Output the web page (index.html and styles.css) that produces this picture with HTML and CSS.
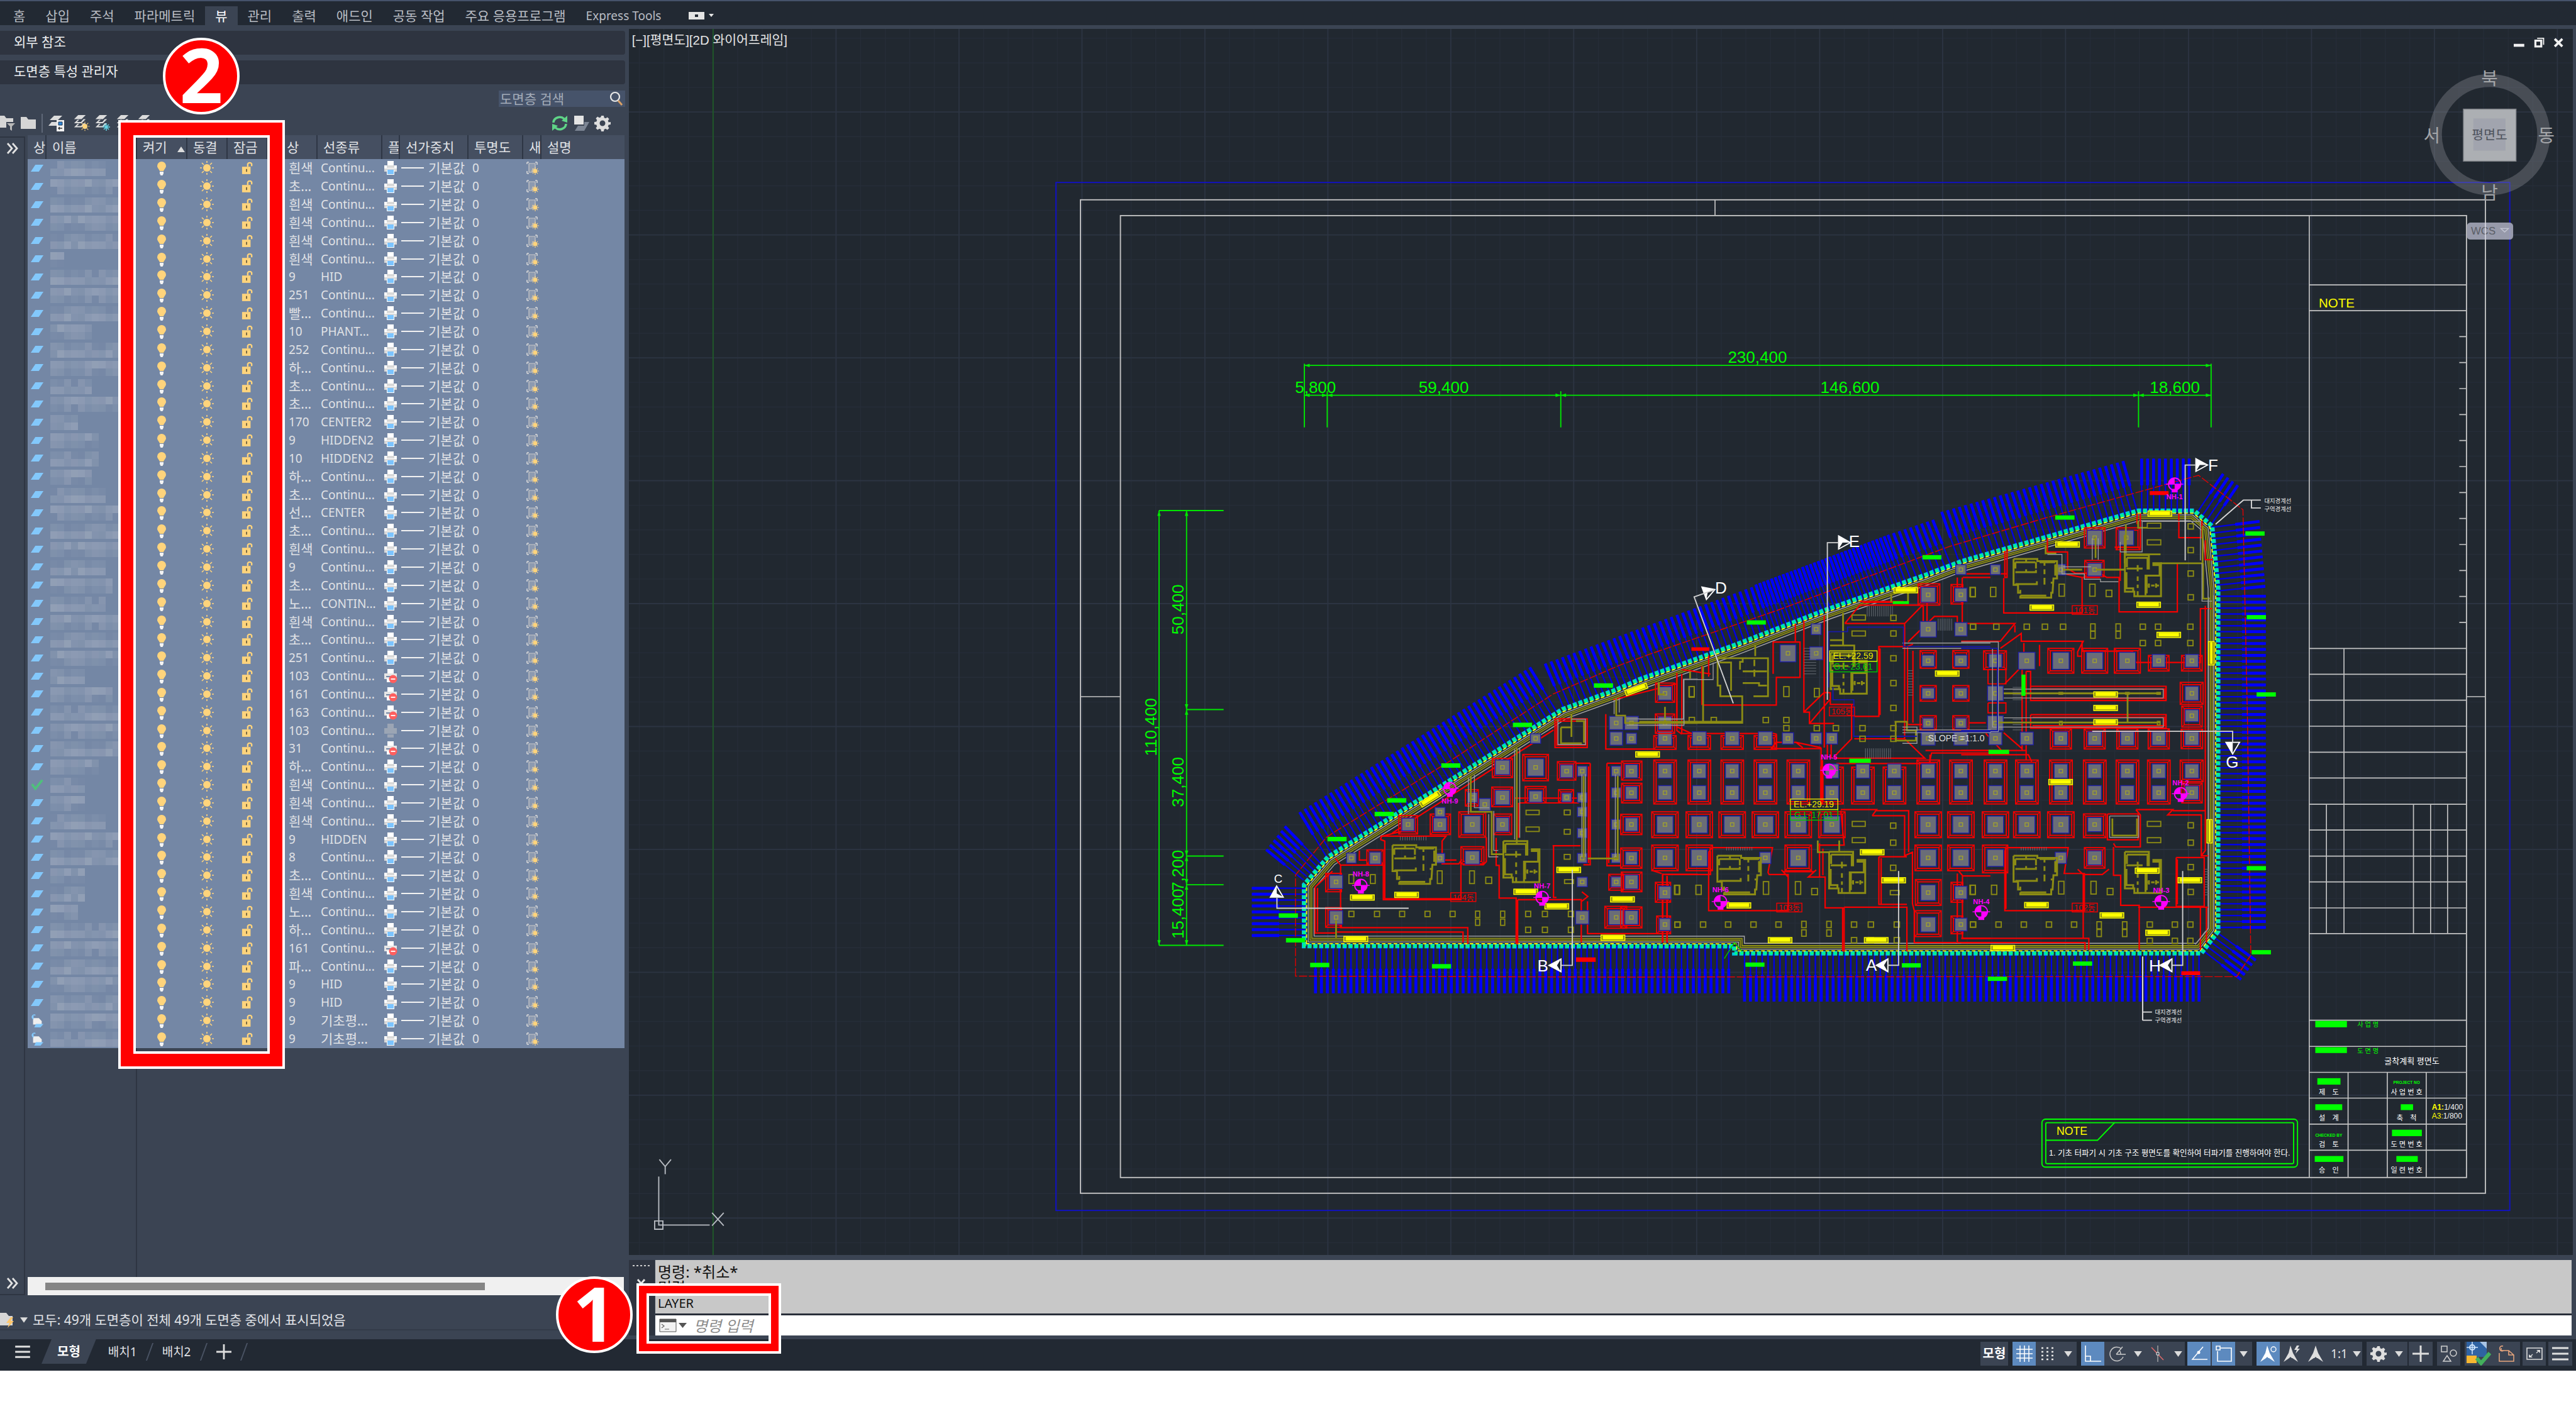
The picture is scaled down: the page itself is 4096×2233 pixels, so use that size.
FILE: index.html
```html
<!DOCTYPE html>
<html lang="ko">
<head>
<meta charset="utf-8">
<title>도면층 특성 관리자</title>
<link rel="stylesheet" href="styles.css">
</head>
<body>
<svg class="defs" aria-hidden="true">
  <symbol id="i-bulb" viewBox="0 0 16 24"><path d="M8 2a7 7 0 0 1 7 7c0 3-3 5-4 8H5C4 14 1 12 1 9a7 7 0 0 1 7-7z" fill="#ffd47c"/><path d="M5 18h6v3l-1.500 3h-3L5 21z" fill="#f4f4f4"/></symbol>
  <symbol id="i-sun" viewBox="0 0 24 24"><circle cx="12" cy="12" r="6" fill="#ffd47c"/><path d="M12 1v3M12 20v3M1 12h3M20 12h3M4 4l3 3M17 17l3 3M20 4l-3 3M7 17l-3 3" stroke="#ffd47c" stroke-width="1.600"/></symbol>
  <symbol id="i-lock" viewBox="0 0 20 24"><path d="M1 10h15v13H1z" fill="#ffd47c"/><path d="M11 10V5a4 4 0 0 1 7 0v4" fill="none" stroke="#ffd47c" stroke-width="2.600"/><path d="M8 14h2v5H8z" fill="#6d5f3c"/></symbol>
  <symbol id="i-print" viewBox="0 0 24 24"><path d="M7 1h10v7H7z" fill="#fff"/><path d="M2 8h20v10H2z" fill="#d9d9d9"/><path d="M2 8h4v4h12V8h4v5H2z" fill="#fff"/><path d="M6 15h12v8H6z" fill="#fff"/><path d="M7 15h10v7H7z" fill="#7cc4ff"/></symbol>
  <symbol id="i-noprint" viewBox="0 0 24 24"><path d="M7 1h10v7H7z" fill="#fff"/><path d="M2 8h20v9H2z" fill="#e6e6e6"/><path d="M5 12h14v2H5z" fill="#7487a5"/><path d="M6 16h6v6H6z" fill="#fff"/><circle cx="16" cy="17" r="6.500" fill="#ff5f5f"/><path d="M12.500 17h7" stroke="#fff" stroke-width="1.800"/></symbol>
  <symbol id="i-dimprint" viewBox="0 0 24 24"><path d="M7 1h10v7H7zM2 8h20v9H2zM7 18h10v5H7z" fill="#9ba5b4"/></symbol>
  <symbol id="i-vp" viewBox="0 0 24 24"><path d="M4 3h3M4 3v3M20 3h-3M20 3v4M4 21h3M4 21v-4" fill="none" stroke="#d8d8d8" stroke-width="1.600"/><path d="M7 5h10v9h-4v5H7z" fill="#8d9ab0" stroke="#c8c8c8" stroke-width="1.200"/><circle cx="17" cy="17" r="3.500" fill="#ffd47c"/><path d="M17 11v2M17 21v2M11 17h2M21 17h2M13 13l1 1M21 21l-1-1M21 13l-1 1M13 21l1-1" stroke="#ffd47c" stroke-width="1.200"/></symbol>
  <symbol id="i-layer" viewBox="0 0 24 16"><path d="M9 2h14l-8 12H1z" fill="#83c8fb"/></symbol>
  <symbol id="i-check" viewBox="0 0 24 20"><path d="M3 9l6 8L21 2" fill="none" stroke="#4fc07c" stroke-width="4"/></symbol>
  <symbol id="i-xref" viewBox="0 0 24 24"><path d="M5 8h10l5 5v6H5z" fill="#eee"/><path d="M10 18h13l-5 6H7z" fill="#83c8fb"/><path d="M9 3a3.500 3.500 0 1 0-4 6v-5" fill="none" stroke="#83c8fb" stroke-width="1.800"/></symbol>
  <symbol id="i-folder" viewBox="0 0 26 26"><path d="M1 3h9l3 4h12v15H1z" fill="#d6d6d6"/></symbol>
  <symbol id="i-filter" viewBox="0 0 26 26"><path d="M0 1h9l3 4h11v6H12v9H0z" fill="#d6d6d6"/><path d="M13 13h13l-5 5v7l-3-2v-5z" fill="#b8b8b8"/></symbol>
  <symbol id="i-stack" viewBox="0 0 26 26"><path d="M10 0h13l-7 7H3zM9 8l-6 6h13l7-7h-4l-4 5H8l4-4zM9 15l-6 6h13l7-7h-4l-4 5H8l4-4z" fill="#dcdcdc"/></symbol>
  <symbol id="i-state" viewBox="0 0 26 26"><path d="M10 1h13l-7 7H3zM6 11h8v6H1z" fill="#dcdcdc"/><path d="M14 8h12v18H14z" fill="#f2f2f2"/><path d="M17 11h6v5h-6z" fill="#2f86d8" stroke="#1c3550"/><path d="M17 21h6M19 19l-2 2 2 2" fill="none" stroke="#333" stroke-width="1.400"/></symbol>
  <symbol id="i-refresh" viewBox="0 0 26 26"><path d="M3 12A10 9 0 0 1 20 6M23 14A10 9 0 0 1 6 20" fill="none" stroke="#5fd487" stroke-width="3.600"/><path d="M25 1v11l-9-3zM1 25V14l9 3z" fill="#5fd487"/></symbol>
  <symbol id="i-over" viewBox="0 0 26 26"><path d="M2 1h15v14H2z" fill="#e4e4e4"/><path d="M18 11h8l-8 14H3l5-8h10z" fill="#7c8594"/></symbol>
  <symbol id="i-gear" viewBox="0 0 26 26"><path fill="#dedede" fill-rule="evenodd" d="M11 1h4l.6 3.300 2.400 1 2.800-1.900 2.800 2.800-1.900 2.800 1 2.400L26 11v4l-3.300.6-1 2.400 1.900 2.800-2.800 2.800-2.800-1.900-2.400 1L15 26h-4l-.6-3.300-2.400-1-2.800 1.900-2.800-2.800 1.900-2.800-1-2.400L0 15v-4l3.300-.6 1-2.400-1.900-2.800 2.800-2.800L8 4.300l2.400-1zM13 8.500a4.500 4.500 0 1 0 0 9 4.500 4.500 0 0 0 0-9z"/></symbol>
  <symbol id="i-mag" viewBox="0 0 24 24"><circle cx="10" cy="9" r="7" fill="none" stroke="#e8e8e8" stroke-width="2.200"/><path d="M15 15l6 7" stroke="#d9a066" stroke-width="3"/></symbol>
  <symbol id="i-caret" viewBox="0 0 14 10"><path d="M0 0h14L7 10z" fill="#dcdcdc"/></symbol>
  <symbol id="i-chev" viewBox="0 0 20 18"><path d="M2 1l7 8-7 8M10 1l7 8-7 8" fill="none" stroke="#e2e2e2" stroke-width="2.800"/></symbol>
  <symbol id="i-menu" viewBox="0 0 26 22"><path d="M0 2h26M0 11h26M0 20h26" stroke="#e0e0e0" stroke-width="3.200"/></symbol>
  <symbol id="i-plus" viewBox="0 0 26 26"><path d="M13 0v26M0 13h26" stroke="#dedede" stroke-width="3"/></symbol>
  <symbol id="i-grid" viewBox="0 0 26 26"><path d="M6 0v26M13 0v26M20 0v26M0 6h26M0 13h26M0 20h26" stroke="#fff" stroke-width="1.500"/></symbol>
  <symbol id="i-snap" viewBox="0 0 26 26"><path d="M3 4h3M11 4h3M19 4h3M3 10h3M11 10h3M19 10h3M3 16h3M11 16h3M19 16h3M3 22h3M11 22h3M19 22h3" stroke="#e6e6e6" stroke-width="2.600"/></symbol>
  <symbol id="i-ortho" viewBox="0 0 26 26"><path d="M1 0v25h25M1 17h8v8" fill="none" stroke="#fff" stroke-width="1.600"/></symbol>
  <symbol id="i-polar" viewBox="0 0 26 26"><path d="M22 18a11 11 0 1 1-3-13M11 14h15M11 14L21 2M18 14a8 8 0 0 0-2-6" fill="none" stroke="#c9c9c9" stroke-width="1.500"/></symbol>
  <symbol id="i-iso" viewBox="0 0 26 26"><path d="M3 3l19 20" stroke="#e06a6a" stroke-width="1.500"/><path d="M13 0v26" stroke="#a9a9a9" stroke-width="1.400"/><path d="M11 11h4v4h-4z" fill="#3b4453" stroke="#eee"/></symbol>
  <symbol id="i-track" viewBox="0 0 26 26"><path d="M19 2L2 22h24" fill="none" stroke="#fff" stroke-width="1.500"/><circle cx="12" cy="11" r="2.500" fill="#fff"/></symbol>
  <symbol id="i-osnap" viewBox="0 0 26 26"><path d="M8 4h17v21H3V9" fill="none" stroke="#fff" stroke-width="1.600"/><path d="M1 1h6v6H1z" fill="none" stroke="#fff" stroke-width="1.600"/></symbol>
  <symbol id="i-person" viewBox="0 0 26 26"><path d="M13 0l4 12 8 14-9-6h-1l-2-2-2 2h-1l-9 6 8-14z" fill="#dedede"/></symbol>
  <symbol id="i-person-o" viewBox="0 0 26 26"><path d="M11 0l4 12 8 14-9-6h-1l-2-2-2 2-9 6 8-14z" fill="#fff"/><circle cx="21" cy="6" r="4" fill="none" stroke="#fff" stroke-width="1.400"/></symbol>
  <symbol id="i-person-b" viewBox="0 0 26 26"><path d="M11 0l4 12 8 14-9-6h-1l-2-2-2 2-9 6 8-14z" fill="#dedede"/><path d="M21 0l-4 7h4l-2 6 7-8h-4l3-5z" fill="#dedede"/></symbol>
  <symbol id="i-shapes" viewBox="0 0 26 26"><path d="M1 1h9v9H1zM10 16l6 9H4z" fill="none" stroke="#cfcfcf" stroke-width="1.500"/><circle cx="20" cy="12" r="5" fill="none" stroke="#cfcfcf" stroke-width="1.500"/></symbol>
  <symbol id="i-hw" viewBox="0 0 40 38"><path d="M1 0h24l8 8v16H1z" fill="#2f63a3"/><path d="M22 0l11 11V0z" fill="#a9c4e4"/><path d="M10 0v20M1 9h18" stroke="#cfe6ff" stroke-width="1.500"/><circle cx="10" cy="9" r="4" fill="none" stroke="#cfe6ff" stroke-width="2"/><path d="M1 22h16v12H1z" fill="#f7b731"/><path d="M17 26l7 8L38 18" fill="none" stroke="#43b05c" stroke-width="6"/></symbol>
  <symbol id="i-clip" viewBox="0 0 26 26"><path d="M8 1a4 4 0 1 0 1 7M5 4v4h12l8 7v10H2V12M17 8v7h8" fill="none" stroke="#e9a67e" stroke-width="1.500"/></symbol>
  <symbol id="i-full" viewBox="0 0 26 20"><path d="M1 1h24v18H1z" fill="none" stroke="#dcdcdc" stroke-width="1.600"/><path d="M16 4h6v5zM4 11v5h6z" fill="#dcdcdc"/><path d="M20 5l-4 4M6 15l4-4" stroke="#dcdcdc" stroke-width="1.400"/></symbol>
  <symbol id="i-cmd" viewBox="0 0 28 22"><path d="M1 1h26v20H1z" fill="#f3f3f3" stroke="#555"/><path d="M1 1h26v5H1z" fill="#555"/><path d="M4 9l4 3-4 3M9 17h7" fill="none" stroke="#666" stroke-width="1.200"/></symbol>
  <symbol id="i-bolt" viewBox="0 0 26 26"><path d="M0 2h12l4 5h6v15H0z" fill="#d6d6d6"/><path d="M19 9l-7 9h5l-3 8 10-11h-5l4-6z" fill="#ffc66b"/></symbol>
</svg>

<div class="app">
  <nav class="ribbon">
    <button>홈</button><button>삽입</button><button>주석</button><button>파라메트릭</button><button class="on">뷰</button><button>관리</button><button>출력</button><button>애드인</button><button>공동 작업</button><button>주요 응용프로그램</button><button class="latin">Express Tools</button>
    <button class="pill" aria-label="리본 최소화"><svg viewBox="0 0 40 14" width="40" height="14"><path d="M0 1h25v12H0z" fill="#e4e4e4"/><path d="M10 5h5v4h-5z" fill="#222933"/><path d="M32 4h8l-4 5z" fill="#e4e4e4"/></svg></button>
  </nav>

  <div class="work">
    <aside class="palette">
      <h2 class="title">외부 참조</h2>
      <h2 class="title">도면층 특성 관리자</h2>
      <div class="searchrow">
        <label class="search"><input type="text" placeholder="도면층 검색" aria-label="도면층 검색"><svg width="24" height="24"><use href="#i-mag"/></svg></label>
      </div>
      <div class="tools">
        <svg><use href="#i-filter"/></svg>
        <svg><use href="#i-folder"/></svg>
        <i class="sep"></i>
        <svg class="state"><use href="#i-state"/></svg>
        <svg class="wide" viewBox="0 0 34 26"><use href="#i-stack" width="24" height="24"/><g transform="translate(12 10)"><use href="#i-sun" width="16" height="16"/></g></svg>
        <svg class="wide" viewBox="0 0 34 26"><use href="#i-stack" width="24" height="24"/><g transform="translate(20 19)" stroke="#63d3e6" stroke-width="1.500"><path d="M-6 0H6M0-6V6M-4-4L4 4M4-4L-4 4"/></g></svg>
        <svg class="wide" viewBox="0 0 34 26"><use href="#i-stack" width="24" height="24"/></svg>
        <svg class="wide" viewBox="0 0 34 26"><use href="#i-stack" width="24" height="24"/></svg>
        <span class="fill"></span>
        <svg><use href="#i-refresh"/></svg>
        <svg><use href="#i-over"/></svg>
        <svg><use href="#i-gear"/></svg>
      </div>
      <div class="body">
        <div class="rail">
          <svg width="20" height="18"><use href="#i-chev"/></svg>
          <svg width="20" height="18"><use href="#i-chev"/></svg>
        </div>
        <div class="list">
          <table class="layers">
            <colgroup><col class="c1"><col class="c2"><col class="c3"><col class="c4"><col class="c4"><col class="c5"><col class="c6"><col class="c7"><col class="c8"><col class="c9"><col class="c1"><col></colgroup>
            <thead><tr><th>상</th><th>이름</th><th class="sort">켜기<svg width="12" height="9"><path d="M0 9h12L6 0z" fill="#ddd"/></svg></th><th>동결</th><th>잠금</th><th class="tail">상</th><th>선종류</th><th>플</th><th>선가중치</th><th>투명도</th><th>새</th><th>설명</th></tr></thead>
            <tbody id="rows"></tbody>
          </table>
          <div class="hscroll"><div></div></div>
        </div>
      </div>
      <div class="summary"><svg width="26" height="26"><use href="#i-bolt"/></svg><svg width="12" height="9"><use href="#i-caret"/></svg><span>모두: 49개 도면층이 전체 49개 도면층 중에서 표시되었음</span></div>
      <div class="annobox tall"></div>
      <div class="badge two">2</div>
    </aside>

    <main class="stage">
      <svg id="view" viewBox="1074 49 3321 2095" preserveAspectRatio="xMinYMin meet"></svg>
      <section class="command">
        <div class="grip"><svg width="38" height="60" viewBox="0 0 38 60"><path d="M6 9h30" stroke="#ccc" stroke-width="2" stroke-dasharray="3 3"/><path d="M14 31l11 13M25 31l-11 13" stroke="#e4e4e4" stroke-width="3"/></svg></div>
        <div class="console">
          <div class="history"><p>명령: *취소*</p><p>명령:</p><p class="cmdname">LAYER</p></div>
          <label class="prompt"><svg width="28" height="22"><use href="#i-cmd"/></svg><svg width="13" height="8"><path d="M0 0h13L6.500 8z" fill="#555"/></svg><input type="text" placeholder="명령 입력" aria-label="명령 입력"></label>
        </div>
      </section>
    </main>
  </div>

  <footer class="status">
    <div class="tabs">
      <button class="ham" aria-label="메뉴"><svg width="26" height="20"><use href="#i-menu"/></svg></button>
      <button class="tab on">모형</button>
      <button class="tab">배치1</button><i></i>
      <button class="tab">배치2</button><i></i>
      <button class="add" aria-label="새 배치"><svg width="24" height="24"><use href="#i-plus"/></svg></button><i></i>
    </div>
    <div class="toggles">
      <button class="g w44 txt">모형</button>
      <div class="g m7"><button class="on w37"><svg><use href="#i-grid"/></svg></button><button class="w38"><svg><use href="#i-snap"/></svg></button><button class="w27"><svg class="car"><use href="#i-caret"/></svg></button></div>
      <div class="g m7"><button class="on w37"><svg><use href="#i-ortho"/></svg></button><button class="w42"><svg><use href="#i-polar"/></svg></button><button class="w22"><svg class="car"><use href="#i-caret"/></svg></button><button class="w42"><svg><use href="#i-iso"/></svg></button><button class="w22"><svg class="car"><use href="#i-caret"/></svg></button></div>
      <div class="g m3"><button class="on w37"><svg><use href="#i-track"/></svg></button><button class="on w37 m2"><svg><use href="#i-osnap"/></svg></button><button class="w27"><svg class="car"><use href="#i-caret"/></svg></button></div>
      <div class="g m7"><button class="on w37"><svg><use href="#i-person-o"/></svg></button><button class="w38"><svg><use href="#i-person-b"/></svg></button><button class="w38"><svg><use href="#i-person"/></svg></button><button class="w37 ratio">1:1</button><button class="w18"><svg class="car"><use href="#i-caret"/></svg></button></div>
      <div class="g m7"><button class="w38"><svg><use href="#i-gear"/></svg></button><button class="w27"><svg class="car"><use href="#i-caret"/></svg></button></div>
      <button class="g w38 m2"><svg><use href="#i-plus"/></svg></button>
      <button class="g w37 m7"><svg><use href="#i-shapes"/></svg></button>
      <div class="g m7"><button class="w44"><svg class="hw"><use href="#i-hw"/></svg></button><button class="w44"><svg><use href="#i-clip"/></svg></button></div>
      <button class="g w37 m3"><svg><use href="#i-full"/></svg></button>
      <button class="g w38 m3"><svg><use href="#i-menu"/></svg></button>
    </div>
  </footer>
  <div class="annobox small"></div>
  <div class="badge one">1</div>
</div>
<script src="drawing.js"></script>
</body>
</html>
```
FILE: styles.css
```css
* { box-sizing: border-box; }
body {
  margin: 0;
  background: #fff;
  color: #e0e2e6;
  font: 21px/28px "Noto Sans", "Noto Sans CJK KR", sans-serif;
}
button, input { font: inherit; color: inherit; border: 0; background: none; padding: 0; margin: 0; }
h2, p { margin: 0; font: inherit; }
.defs { position: absolute; width: 0; height: 0; }
.app {
  position: relative;
  display: flex;
  flex-direction: column;
  height: calc(100vh - 53px);
  background: #3b4453;
}

/* ribbon */
.ribbon {
  display: flex;
  flex: none;
  height: 40px;
  padding: 8px 0 0 5px;
  background: #222933;
  border-top: 2px solid #46526b;
  color: #b9bdc4;
}
.ribbon button { padding: 0 16px; height: 30px; white-space: nowrap; }
.ribbon .on { background: #3b4453; color: #fff; }
.ribbon .latin { font-size: 19px; }
.ribbon .pill { padding: 0 28px; }
.ribbon .pill svg { display: block; }

.work { display: flex; flex: 1; min-height: 0; }

/* palette */
.palette {
  position: relative;
  display: flex;
  flex-direction: column;
  flex: none;
  width: 994px;
  padding-top: 9px;
}
.title {
  height: 38px;
  margin-bottom: 9px;
  padding: 3px 22px;
  background: #2e3440;
  border-radius: 0 4px 4px 0;
  color: #eceef0;
}
.searchrow { display: flex; justify-content: flex-end; height: 26px; margin-top: 1px; }
.search {
  display: flex;
  align-items: center;
  width: 201px;
  padding: 0 2px;
  background: #46536a;
}
.search input { flex: 1; width: 0; }
.search input::placeholder { color: #a3abb8; opacity: 1; }
.tools {
  display: flex;
  align-items: center;
  height: 45px;
  padding: 6px 23px 0 0;
  gap: 8px;
}
.tools svg { width: 26px; height: 26px; flex: none; }
.tools svg:first-child { margin-left: -2px; }
.tools .state { margin-right: 5px; }
.tools .wide { width: 34px; margin-right: -8px; }
.sep { width: 2px; height: 30px; background: #5f6878; }
.fill { flex: 1; }
.body { display: flex; flex: 1; min-height: 0; }
.rail {
  display: flex;
  flex-direction: column;
  justify-content: space-between;
  width: 40px;
  margin: 2px 4px 0 0;
  padding: 8px 10px;
  border: 2px solid #2e3542;
  border-left: 0;
}
.list {
  display: flex;
  flex-direction: column;
  justify-content: space-between;
  flex: 1;
  background: linear-gradient(#2e3542, #2e3542) 172px 0 / 2px 100% no-repeat;
}
.layers {
  width: 949px;
  height: 1452px;
  border-collapse: collapse;
  table-layout: fixed;
}
.c1 { width: 29px; }
.c2 { width: 144px; }
.c3 { width: 80px; }
.c4 { width: 64px; }
.c5 { width: 79px; }
.c6 { width: 103px; }
.c7 { width: 28px; }
.c8 { width: 109px; }
.c9 { width: 87px; }
.layers th {
  height: 38px;
  padding: 0 0 0 9px;
  background: #454f61;
  border-right: 2px solid #2e3645;
  font-weight: 400;
  text-align: left;
  white-space: nowrap;
  overflow: hidden;
}
.layers th:last-child { border-right: 0; }
.layers .tail { padding-left: 30px; }
.sort svg { margin-left: 16px; }
.layers td {
  padding: 0;
  background: #7487a5;
  line-height: 26px;
  text-align: center;
  white-space: nowrap;
  overflow: hidden;
}
.layers td svg { display: block; margin: 0 auto; }
.layers .name svg { margin: 0; }
.layers .color { padding-left: 34px; text-align: left; }
.layers .type { padding-left: 6px; text-align: left; }
.layers .num { font-size: 19px; }
.layers .weight { text-align: left; padding-left: 3px; }
.weight span { display: flex; align-items: center; gap: 7px; }
.weight span::before { content: ""; width: 36px; height: 2px; background: #f2f2f2; }
.layers .alpha { padding-left: 7px; text-align: left; font-size: 19px; }
.hscroll { height: 29px; margin-right: 2px; padding: 9px 0 8px 28px; background: #f0f0f0; }
.hscroll div { width: 76%; height: 12px; background: #858585; }
.summary {
  display: flex;
  align-items: center;
  gap: 8px;
  height: 56px;
  margin-bottom: 14px;
  padding-top: 24px;
  border-bottom: 2px solid #333b49;
}
.summary svg { flex: none; }
.summary svg:first-child { margin-left: -2px; }

/* drawing area */
.stage { display: flex; flex-direction: column; flex: 1; min-width: 0; padding: 6px 5px 0 6px; }
#view { display: block; width: 100%; flex: 1; min-height: 0; background: #212830; }
#view text { font-family: "Liberation Sans", "Noto Sans CJK KR", sans-serif; }
.command { display: flex; flex: none; height: 126px; margin-top: 8px; padding-bottom: 6px; }
.grip { width: 41px; margin-right: 1px; background: #2e3440; }
.console { display: flex; flex-direction: column; flex: 1; margin-right: 2px; background: #2a303b; }
.history {
  flex: 1;
  padding: 6px 4px 0;
  background: #c8c8c8;
  color: #111;
  font-size: 24px;
  line-height: 25px;
}
.history .cmdname { font-size: 20px; }
.prompt {
  display: flex;
  align-items: center;
  gap: 3px;
  height: 32px;
  margin-top: 3px;
  padding-left: 6px;
  background: #fff;
}
.prompt input { flex: 1; padding-left: 8px; height: 32px; color: #333; font-size: 24px; font-style: italic; }
.prompt input::placeholder { color: #8c8c8c; opacity: 1; }

/* status bar */
.status {
  display: flex;
  justify-content: space-between;
  flex: none;
  height: 50px;
  background: #222933;
}
.tabs { display: flex; align-items: center; height: 39px; }
.tabs i { width: 2px; height: 28px; background: #4a5364; transform: skewX(-20deg); }
.tabs svg { display: block; }
.ham { padding: 0 17px 0 23px; }
.tab { height: 39px; padding: 0 19px; font-size: 19px; }
.tab.on {
  padding: 0 25px;
  background: #3b4453;
  color: #fff;
  font-size: 20px;
  font-weight: 700;
  clip-path: polygon(16px 0, 100% 0, calc(100% - 16px) 100%, 0 100%);
}
.add { padding: 0 19px; }
.toggles { display: flex; height: 42px; padding: 4px 6px 0 0; }
.toggles button { display: flex; align-items: center; justify-content: center; height: 38px; }
.toggles svg { width: 26px; height: 26px; }
.toggles .car { width: 13px; height: 9px; }
.toggles .hw { width: 40px; height: 38px; }
.g { display: flex; background: #3b4453; }
.toggles .on { background: #5d8abf; }
.txt { font-size: 20px; font-weight: 700; color: #fff; }
.ratio { font-size: 19px; }
.w18 { width: 18px; }
.w22 { width: 22px; }
.w27 { width: 27px; }
.w37 { width: 37px; }
.w38 { width: 38px; }
.w42 { width: 42px; }
.w44 { width: 44px; }
.m2 { margin-left: 2px; }
.m3 { margin-left: 4px; }
.m7 { margin-left: 7px; }

/* call-outs laid over the window */
.annobox { position: absolute; border: 20px solid #f00; outline: 4px solid #fff; box-shadow: inset 0 0 0 4px #fff; }
.tall { left: 192px; top: 155px; width: 257px; height: 1501px; }
.small { left: 1016px; top: 2045px; width: 222px; height: 104px; border-width: 12px; }
.badge {
  position: absolute;
  display: flex;
  align-items: center;
  justify-content: center;
  width: 122px;
  height: 122px;
  padding-bottom: 6px;
  border: 4px solid #fff;
  border-radius: 50%;
  background: #f00;
  color: #fff;
  font-size: 120px;
  font-weight: 700;
  line-height: 108px;
}
.two { left: 259px; top: 20px; }
.one { left: 884px; top: 2030px; }
```
FILE: drawing.js
```js
// ---- layer table -------------------------------------------------------
const C = 'Continu...';
const layers = [
  ['흰색', C, 80], ['초...', C, 115], ['흰색', C, 120], ['흰색', C, 120], ['흰색', C, 100], ['흰색', C, 22],
  ['9', 'HID', 115], ['251', C, 112], ['빨...', C, 112], ['10', 'PHANT...', 57], ['252', C, 120], ['하...', C, 115],
  ['초...', C, 57], ['초...', C, 120], ['170', 'CENTER2', 34], ['9', 'HIDDEN2', 68], ['10', 'HIDDEN2', 68],
  ['하...', C, 57], ['초...', C, 80], ['선...', 'CENTER', 120], ['초...', C, 103], ['흰색', C, 115], ['9', C, 80],
  ['초...', C, 92], ['노...', 'CONTIN...', 80], ['흰색', C, 120], ['초...', C, 115], ['251', C, 120],
  ['103', C, 45, 'noprint'], ['161', C, 92, 'noprint'], ['163', C, 103, 'noprint'], ['103', C, 115, 'dimprint'],
  ['31', C, 120, 'noprint'], ['하...', C, 68], ['흰색', C, 45, 'print', 'check'], ['흰색', C, 45], ['흰색', C, 80],
  ['9', 'HIDDEN', 115], ['8', C, 115], ['초...', C, 50], ['흰색', C, 45], ['노...', C, 34], ['하...', C, 120],
  ['161', C, 115, 'noprint'], ['파...', C, 115], ['9', 'HID', 120], ['9', 'HID', 115],
  ['9', '기초평...', 120, 'print', 'xref'], ['9', '기초평...', 120, 'print', 'xref']
];
const icon = (n, w, h) => `<svg width="${w}" height="${h}"><use href="#i-${n}"/></svg>`;
const latin = s => /^[\x00-\x7f]+$/.test(s) ? ' num' : '';
function mosaic(row, width) {
  let out = '';
  for (let i = 0; i * 11 < width; i++) {
    for (let j = 0; j < 2; j++) {
      const v = ((row * 7 + i * 5 + j * 11 + i * i * 3) % 9) / 9;
      const base = (row + j) % 2 ? 0.16 : 0.03;
      out += `<rect x="${7 + i * 11}" y="${j * 12 + 2}" width="11" height="12" fill="#c9cdd6" opacity="${(base + v * 0.2).toFixed(2)}"/>`;
    }
  }
  return `<svg width="142" height="26">${out}</svg>`;
}
document.getElementById('rows').innerHTML = layers.map(([color, type, w, plot = 'print', state = 'layer'], i) => `<tr>
<td>${state === 'layer' ? icon('layer', 22, 15) : icon(state, 22, 22)}</td><td class="name">${mosaic(i, w)}</td>
<td>${icon('bulb', 16, 24)}</td><td>${icon('sun', 24, 24)}</td><td>${icon('lock', 18, 22)}</td>
<td class="color${latin(color)}">${color}</td><td class="type${latin(type)}">${type}</td><td>${icon(plot, 24, 24)}</td>
<td class="weight"><span>기본값</span></td><td class="alpha">0</td><td>${icon('vp', 24, 24)}</td><td></td></tr>`).join('');

// ---- drawing -----------------------------------------------------------
let svg = '';
const r1 = n => Math.round(n * 10) / 10;
// each sector of the plan has its own origin and units
const sector = (ox, oy, sx, sy) => (x, y) => [r1(ox + x / sx), r1(oy + y / sy)];
const W = sector(2100, 900, 1.96, 1.8447);
const M = sector(2800, 750, 2.6133, 1.6505);
const E = sector(3350, 750, 2.6133, 1.6505);
const scale = new Map([[W, [1.96, 1.8447]], [M, [2.6133, 1.6505]], [E, [2.6133, 1.6505]]]);
const path = (d, stroke, w = 1.5, extra = '') => { svg += `<path d="${d}" fill="none" stroke="${stroke}" stroke-width="${w}" ${extra}/>`; };
const line = (x1, y1, x2, y2, s, w, e) => path(`M${x1} ${y1}L${x2} ${y2}`, s, w, e);
const rect = (x, y, w, h, fill, stroke = 'none', sw = 1.5, e = '') => { svg += `<rect x="${r1(x)}" y="${r1(y)}" width="${r1(w)}" height="${r1(h)}" fill="${fill}" stroke="${stroke}" stroke-width="${sw}" ${e}/>`; };
const text = (x, y, s, fill, size, e = 'text-anchor="middle"') => { svg += `<text x="${r1(x)}" y="${r1(y)}" fill="${fill}" font-size="${size}" ${e}>${s}</text>`; };
const poly = (S, str, stroke, w, e) => {
  let x = 0, y = 0, d = '';
  str.replace(/([MLHV])\s*(-?\d+)(?:,(-?\d+))?/g, (_, c, a, b) => {
    if (c === 'H') x = +a; else if (c === 'V') y = +a; else { x = +a; y = +b; }
    const p = S(x, y);
    d += (c === 'M' ? 'M' : 'L') + p.join(' ');
  });
  path(d, stroke, w, e);
};

// grid
let minor = '', major = '';
for (let i = -3; i < 76; i++) { const x = r1(1217.8 + i * 42.01); if (x > 1074) (i % 5 ? minor += `M${x} 49V2144` : major += `M${x} 49V2144`); }
for (let i = -3; i < 47; i++) { const y = r1(191 + i * 42); (i % 5 ? minor += `M1074 ${y}H4395` : major += `M1074 ${y}H4395`); }
path(minor, '#262d38', 1.5);
path(major, '#2c3442', 2);
line(1217.8, 49, 1217.8, 2144, '#1f5a26', 2);

// sheet frames
rect(1803.6, 311.4, 2483.7, 1756.6, 'none', '#1010c8', 2);
rect(1845.4, 341, 2400.2, 1697.6, 'none', '#c4c4c4', 2);
rect(1913.7, 368, 2299.6, 1643.7, 'none', '#c4c4c4', 2);
let frame = 'M3944.700 368V2011M2929.500 341V368M1845 1190H1913M4213 1190H4245';
for (const y of [486.4, 530.4, 1107.7, 1151.8, 1196, 1240.5, 1285, 1329, 1373.8, 1418, 1462.5, 1506.6, 1551, 1595, 1743, 1787.7, 1832, 1876, 1920.5, 1965]) frame += `M3944.700 ${y}H4213`;
for (let y = 574.8; y < 1100; y += 44.4) frame += `M4201 ${r1(y)}H4213`;
frame += 'M4004 1107V1595M3974 1374V1595M4122.700 1374V1595M4152 1374V1595M4181 1374V1595M4011 1832V2011M4078 1832V2011M4144.500 1832V2011';
path(frame, '#c4c4c4', 1.8);
text(3961, 525, 'NOTE', '#ffff00', 22, '');

// title block
const G = '#00ff00';
for (const [x, y, w, h] of [[3955, 1744, 54, 11], [3955, 1789, 54, 10], [3958.5, 1842, 39.5, 11], [3955, 1886.5, 46, 10], [3954, 1975, 49, 10], [4101, 1886.5, 21, 10], [4086, 1930, 51, 11], [4093.5, 1975, 36.5, 10]]) rect(x, y, w, h, G);
text(4045, 1754, '사 업 명', G, 11);
text(4045, 1799, '도 면 명', G, 11);
text(4120, 1817, '굴착계획 평면도', '#fff', 14);
text(3978, 1942, 'CHECKED BY', G, 7, 'text-anchor="middle" font-weight="700"');
text(4111, 1852, 'PROJECT NO', G, 7, 'text-anchor="middle" font-weight="700"');
[[1870, '제　도', '사 업 번 호'], [1914, '설　계', '축　척'], [1959, '검　토', '도 면 번 호'], [2003, '승　인', '일 련 번 호']].forEach(([y, a, b]) => { text(3978, y, a, '#fff', 12); text(4111, y, b, '#fff', 12); });
text(4154, 1896, '<tspan fill="#ffff00" font-weight="700">A1:</tspan>1/400', '#eee', 13, '');
text(4154, 1911, '<tspan fill="#ffff00">A3:</tspan>1/800', '#eee', 13, '');

// note box
rect(3488, 1912, 436.6, 82, 'none', G, 2, 'rx="6"');
rect(3494.6, 1918, 423.4, 70, 'none', G, 2, 'rx="2"');
path('M3495 1948H3583L3612 1918', G, 2);
text(3513, 1939, 'NOTE', '#ffff00', 19, '');
text(3500, 1974, '1. 기초 터파기 시 기초 구조 평면도를 확인하여 터파기를 진행하여야 한다.', '#fff', 13.5, '');

// dimensions
path('M2228 624H3777M2228 675H3777M2228 621V730M2267 668V730M2666 668V730M3653 668V730M3777 621V730M1979.700 872V1615M2026.700 872V1615M1979.700 872H2090M2026.700 1212H2090M2026.700 1462.400H2090M2026.700 1511.400H2090M1979.700 1615H2090', '#00e800', 2);
const tipH = (x, y, d) => { svg += `<path d="M${x} ${y}l${9 * d} -3v6z" fill="#00e800"/>`; };
const tipV = (x, y, d) => { svg += `<path d="M${x} ${y}l-3 ${9 * d}h6z" fill="#00e800"/>`; };
tipH(2228, 624, 1); tipH(3777, 624, -1);
for (const x of [2228, 2267, 2666, 3653]) tipH(x, 675, 1);
for (const x of [2267, 2666, 3653, 3777]) tipH(x, 675, -1);
tipV(1979.7, 872, 1); tipV(1979.7, 1615, -1);
for (const y of [872, 1212, 1462, 1511]) tipV(2026.7, y, 1);
for (const y of [1212, 1462, 1511, 1615]) tipV(2026.7, y, -1);
for (const [x, y, s] of [[3002, 619, '230,400'], [2247, 671, '5,800'], [2466, 671, '59,400'], [3160, 671, '146,600'], [3715, 671, '18,600']]) text(x, y, s, G, 28);
for (const [x, y, s] of [[1975, 1242, '110,400'], [2022, 1041, '50,400'], [2022, 1336, '37,400'], [2022, 1487, '7,200'], [2022, 1561, '15,400']]) text(x, y, s, G, 28, `text-anchor="middle" transform="rotate(-90 ${x} ${y})"`);

// ground anchors: n lines spread between two end lines, outer half thick
function anchors(a, b, n, grip = 0.5) {
  let thin = '', thick = '';
  for (let i = 0; i < n; i++) {
    const t = i / (n - 1), p = a.map((v, k) => v + (b[k] - v) * t);
    const mx = p[0] + (p[2] - p[0]) * grip, my = p[1] + (p[3] - p[1]) * grip;
    thin += `M${r1(p[0])} ${r1(p[1])}L${r1(p[2])} ${r1(p[3])}`;
    thick += `M${r1(p[0])} ${r1(p[1])}L${r1(mx)} ${r1(my)}`;
  }
  path(thin, '#0000e8', 2.5);
  path(thick, '#0000ff', 5);
}
const seg = (S, x1, y1, x2, y2) => [...S(x1, y1), ...S(x2, y2)];
anchors(seg(W, 75, 1139, 258, 1139), seg(W, 75, 1288, 258, 1288), 9);
anchors(seg(W, 123, 1017, 248, 1113), seg(W, 185, 944, 305, 1060), 6);
anchors(seg(W, 235, 899, 325, 1040), seg(W, 1005, 443, 1095, 582), 46);
anchors(seg(W, 1057, 431, 1120, 572), seg(M, 500, 418, 570, 548), 37);
anchors(seg(M, 520, 410, 590, 543), seg(M, 1110, 270, 1190, 405), 35);
anchors(seg(M, 1135, 265, 1215, 400), seg(M, 1310, 228, 1395, 362), 8);
anchors(seg(M, 1350, 205, 1430, 350), seg(E, 722, 62, 785, 202), 32);
anchors(seg(E, 806, 55, 806, 205), seg(E, 1018, 55, 1018, 205), 9);
anchors(seg(E, 1170, 98, 1050, 210), seg(E, 1235, 130, 1112, 245), 4);
anchors(seg(E, 1332, 232, 1115, 249), seg(E, 1358, 415, 1145, 428), 12);
anchors(seg(E, 1360, 443, 1147, 443), seg(E, 1360, 1377, 1147, 1377), 57);
anchors(seg(E, 1315, 1470, 1140, 1390), seg(E, 1250, 1524, 1075, 1440), 5);
anchors([2979.9, 1711, 2979.9, 1630], [3756.4, 1711, 3756.4, 1630], 78, 0.56);
anchors([2247, 1697, 2247, 1616], [2953, 1697, 2953, 1616], 71, 0.52);

// site boundary
path('M' + [W(221, 1416), W(221, 1097), W(325, 978), W(356, 959), W(735, 740), W(945, 611), W(1083, 527), W(1306, 436), W(1397, 405), M(35, 609), M(620, 482), M(1383, 303), E(372, 223), E(1060, 102), E(1258, 199), E(1278, 780), E(1293, 1455), E(1230, 1516), E(0, 1516), W(1287, 1419)].map(p => p.join(' ')).join('L') + 'z', '#e00000', 1.5, 'stroke-dasharray="14 3"');

// retaining wall outline and its inward offsets
const wall = [W(250, 1321), W(250, 1128), W(330, 1040), W(700, 822), W(1115, 575), W(1290, 515), M(0, 678), M(430, 580), M(840, 480), M(1270, 385), E(0, 345), E(790, 202), E(1040, 202), E(1120, 245), E(1147, 420), E(1147, 1388), E(1072, 1450), M(425, 1450), M(425, 1430)];
function inset(p, d) {
  const n = p.length;
  return 'M' + p.map((c, i) => {
    const a = p[(i + n - 1) % n], b = p[(i + 1) % n];
    const u = [c[0] - a[0], c[1] - a[1]], v = [b[0] - c[0], b[1] - c[1]];
    const lu = Math.hypot(...u), lv = Math.hypot(...v);
    const n1 = [-u[1] / lu, u[0] / lu], n2 = [-v[1] / lv, v[0] / lv];
    const k = d / Math.max(0.35, 1 + n1[0] * n2[0] + n1[1] * n2[1]);
    return `${r1(c[0] + (n1[0] + n2[0]) * k)} ${r1(c[1] + (n1[1] + n2[1]) * k)}`;
  }).join('L') + 'z';
}
path(inset(wall, 0), '#00c4e0', 8, 'stroke-dasharray="7 3"');
path(inset(wall, 0), '#00ff80', 4, 'stroke-dasharray="5 5"');
path(inset(wall, 4), '#ffff00', 2, 'stroke-dasharray="6 4"');
path(inset(wall, 7), '#a8a8a8', 1.5);
path(inset(wall, 10), '#8c8c14', 2);
path(inset(wall, 13), '#8c8c14', 2);
path(inset(wall, 17), '#a8a8a8', 1.5);

// excavation edges
const R = '#f40000';
poly(W, 'M287,1283V1135L345,1085 M295,1275V1138 M372,1066H515V1175H775V1048 M372,1066V1263H798V1315 M360,1277H782V1310 M288,1280H355 M505,985L520,990V1172H772 M505,985L510,975L575,960 M505,975H725L712,990V1062H768L778,1048 M712,1050H760 M860,978V1055L850,1065H780 M893,980V1067H903V1170H960V1315 M965,1175V1315 M965,1175H1178V1310 M1082,1005H1175 M1085,1007V1168H1095 M1199,1180V1282H1450 M1208,745V1065H1185 M1202,755V1060 M1264,745V1068H1310 M1270,755V1060 M1264,745H1310 M1160,745H1208 M955,855H1175 M970,870H1170 M968,870V980 M1090,605H1198V695H1090V605 M1096,612H1192V688H1096V612 M1285,545L1495,495 M1498,460V630L1568,660 M1450,1095V1310 M1465,1100V1310 M355,1045L372,1066 M435,1020V1050H460 M545,965L1085,640 M1180,1150L1200,1165L1180,1180 M1260,590V700H1420 M1450,1095H1568', R, 2.4);
poly(M, 'M285,750H612V672H718V572H598V662 M190,662V830H600L612,832V870 M168,670V822L190,832 M735,512V770H760V802H870 M735,770L825,715H853V748H960 M760,802L850,735 M697,520V570 M826,497V870 M840,830V900 M857,830V900 M948,750V845L868,897 M960,845H1185L1275,900H868 M1185,843V585H1070V782H960 M1075,590V778 M1185,520V585 M918,520L985,468H1265L1185,520H918 M985,458H1180 M1268,470V540 M1200,572L1318,500H1420V535 M1285,460V520 M1198,585V805H1300 M1222,597V800 M1198,585L1222,578 M812,870V1030 M812,870L700,855H610L590,873H810 M730,870L700,855 M818,905V1030 M880,915H1295L1305,885H1568 M1278,878H1568 M1298,890V915H1320 M190,650L318,662 M310,610V670 M310,1165V1330H665V1228H580L575,1222L595,1152H325L310,1165 M318,1162V1228H120 M125,1232V1420 M105,1225V1420 M60,1217L100,1225 M635,1215L665,1235 M790,1215L755,1235H830V1322H915V1445 M908,1322V1445 M640,1220H780 M915,1320H1195V1445 M1070,1178H1195 M1070,1178V1312H1078 M1080,1182V1312H1195 M900,1045H1060L1040,1062 M1055,1048H1203V1165 M1040,1062H1185V1175L1220,1165V1310L1228,1330V1420H1415 M795,1145H915L900,1048 M805,1140V1235 M820,1155V1230 M1425,1217L1445,1232H1568 M1443,1232V1408H1568 M1420,1225V1420H1568 M1445,390H1568 M1420,390V445 M1000,460H1180 M280,750V640', R, 2.4);
poly(E, 'M190,392V490H540V390 M195,315V390H205V310 M705,392V487H965V350 M385,278V318H475V365L510,378H620L650,390H710 M460,380L540,390H620 M710,320V400 M685,305H800V210 M785,210V240 M972,210V278H1075V230 M1090,285V340H1125 M0,380H205 M5,390V520H240L175,570H0 M175,590L268,548V570H545L520,600V612H540 M350,580V640 M240,525V545 M280,575V600 M540,570V598H765L780,630H1068V478H1120 M760,600V625 M1090,470V640 M1090,630V1160 M310,697H915V737H310V697 M318,705H908V731H318 M310,777H915V815H310V777 M318,784H908V808H318 M272,640V880 M290,655V905 M0,878H290 M0,890H300L315,910 M290,655H310V700 M195,690L280,635 M110,830L180,878 M190,828L270,872 M35,800H110 M780,1045H945L922,1060H1072V1175H1105 M780,1045L800,1060V1150H690L680,1140 M945,1048H1090V1160L1072,1175 M960,1180H1085V1318H960V1180 M965,1185V1312 M195,1160V1330H550V1225H460L478,1152H205L195,1162 M200,1157V1325 M545,1225V1410 M520,1213L545,1228H630L660,1213 M680,1150V1230H712V1315H795V1440 M790,1320H1068V1440 M1068,1320H1105 M1095,1320V1420 M0,1408H570V1440 M0,1420H553V1440 M653,1057H790V1130H653V1057', R, 2.4);

// footings: [x, y, pad w, pad h, frame l, t, r, b]
function footings(S, list) {
  const [sx, sy] = scale.get(S);
  for (const [x, y, w, h, l, t, r, b] of list) {
    if (l !== undefined) {
      const [L, T] = S(l, t), [Rt, B] = S(r, b), k = 4;
      rect(L, T, Rt - L, B - T, 'none', R, 2);
      rect(L + k, T + k, Rt - L - 2 * k, B - T - 2 * k, 'none', R, 2);
      path(`M${L} ${T}l${k} ${k}M${Rt} ${T}l-${k} ${k}M${L} ${B}l${k} -${k}M${Rt} ${B}l-${k} -${k}`, R, 1.5);
    }
    const [cx, cy] = S(x, y);
    if (w) {
      rect(cx - w / sx / 2, cy - h / sy / 2, w / sx, h / sy, '#6a6d78', '#2020a8', 1.5);
      rect(cx - 3, cy - 3, 6, 6, 'none', '#a0a030', 1.5);
    }
  }
}
footings(W, [[1025, 667, 34, 30], [914, 758, 48, 46, 880, 730, 948, 790], [1025, 758, 55, 55, 982, 717, 1068, 800], [1129, 770, 42, 40, 1098, 740, 1160, 798], [1181, 770, 32, 32], [1295, 770, 32, 32], [1346, 770, 42, 42, 1313, 738, 1381, 798], [814, 853, 32, 32, 790, 828, 833, 880], [855, 875, 38, 38], [914, 853, 48, 46, 878, 820, 948, 882], [1025, 850, 44, 36, 990, 818, 1060, 870], [1129, 853, 32, 28, 1102, 828, 1152, 868], [1181, 853, 32, 30], [1295, 838, 32, 32], [1346, 838, 40, 40, 1313, 808, 1381, 870], [705, 938, 44, 42, 672, 905, 740, 970], [705, 899, 34, 30], [598, 938, 42, 40, 567, 910, 630, 968], [813, 938, 55, 55, 768, 898, 858, 978], [914, 938, 44, 44, 885, 905, 945, 970], [1181, 898, 32, 30], [1181, 965, 32, 30], [1295, 938, 32, 32], [1346, 938, 42, 42, 1310, 906, 1381, 970], [1181, 1044, 32, 30], [1295, 1044, 32, 30], [1346, 1044, 40, 40, 1310, 1012, 1381, 1076], [408, 1044, 32, 32], [488, 1044, 38, 38, 460, 1018, 515, 1062], [705, 1044, 32, 30], [813, 1042, 48, 42, 775, 1008, 852, 1062], [357, 1119, 44, 42, 322, 1092, 375, 1150], [357, 1231, 44, 42, 322, 1200, 375, 1262], [1181, 1119, 34, 30], [1295, 1119, 34, 32, 1270, 1095, 1318, 1145], [1346, 1119, 44, 44, 1312, 1088, 1381, 1150], [1181, 1231, 44, 42], [1295, 1231, 50, 46, 1257, 1196, 1330, 1265], [1346, 1231, 44, 44, 1310, 1198, 1381, 1264], [1295, 618, 46, 42], [1346, 618, 46, 42], [1295, 667, 42, 42], [1346, 667, 34, 34]]);
const pads = [];
const mx = [115, 268, 415, 563, 710, 860, 998, 1139, 1290, 1436], ex = [153, 293, 445, 596, 742, 882, 1030];
for (const x of mx) pads.push([x, 936, 60, 40, x - 50, x > 800 && x < 1200 ? 925 : 905, x + 51, 1029], [x, 997, 60, 40]);
for (const x of [115, 268, 415, 563, 710, 860, 1290, 1436]) pads.push([x, 1087, 73, 48, x - 59, 1051, x + 59, 1124]);
for (const x of [115, 268, 710, 1290, 1436]) pads.push([x, 1181, 73, 48, x - 59, 1145, x + 59, 1217]);
for (const x of [115, 268, 415, 563]) pads.push([x, 844, 62, 38, x - 50, 836, x + 50, 875]);
for (const x of [664, 790, 860]) pads.push([x, 844, 50, 32]);
for (const x of [1290, 1436]) pads.push([x, 844, 62, 38], [x, 801, 48, 28, x - 36, 780, x + 36, 820], [x, 717, 56, 30, x - 36, 695, x + 36, 739], [x, 625, 56, 32, x - 36, 596, x + 36, 646]);
pads.push([563, 1181, 50, 32], [115, 801, 58, 36, 72, 775, 158, 830], [115, 717, 58, 38, 73, 688, 158, 742], [664, 604, 70, 48], [790, 536, 44, 30], [790, 604, 58, 36], [1290, 439, 64, 42, 1245, 408, 1342, 468], [1290, 536, 72, 44], [1436, 439, 54, 38, 1392, 410, 1445, 465], [1436, 536, 54, 38], [1436, 368, 46, 28], [115, 1279, 54, 36, 72, 1250, 140, 1306], [115, 1369, 50, 34, 78, 1345, 140, 1395], [1290, 1279, 66, 44, 1233, 1242, 1348, 1315], [1290, 1369, 66, 42, 1230, 1330, 1348, 1403], [1436, 1279, 54, 36, 1392, 1250, 1445, 1306], [1436, 1369, 54, 36, 1392, 1345, 1445, 1395]);
footings(M, pads);
const epads = [];
for (const x of ex.slice(0, 6)) epads.push([x, 936, 60, 40, x - 50, 905, x + 51, 1029], [x, 997, 60, 40]);
for (const x of [153, 293, 445]) epads.push([x, 1087, 73, 48, x - 59, 1051, x + 59, 1124]);
for (const x of [445, 596, 742, 882]) epads.push([x, 844, 60, 38, x - 47, 817, x + 47, 874]);
for (const x of [445, 596, 742]) epads.push([x, 625, 74, 48, x - 58, 590, x + 58, 660]);
epads.push([1030, 936, 62, 40, 978, 905, 1080, 966], [1030, 997, 60, 38, 985, 970, 1076, 1026], [1030, 844, 62, 38, 982, 818, 1078, 873], [1030, 780, 60, 34, 985, 753, 1076, 812], [1030, 717, 60, 40, 978, 686, 1080, 748], [1030, 625, 58, 36, 984, 610, 1076, 654], [882, 625, 58, 36, 836, 610, 928, 654], [596, 1087, 62, 40, 546, 1057, 646, 1124], [596, 1181, 62, 40, 550, 1152, 642, 1210], [153, 1181, 73, 48, 95, 1145, 208, 1223], [445, 1181, 50, 32], [153, 844, 58, 36], [293, 844, 58, 36], [153, 801, 70, 42], [153, 717, 70, 42], [153, 625, 58, 38, 100, 597, 202, 650], [293, 625, 74, 48], [153, 368, 44, 28], [445, 368, 44, 30], [596, 278, 66, 42, 550, 250, 642, 307], [737, 278, 66, 42, 692, 250, 800, 312], [596, 368, 62, 36, 552, 342, 638, 388]);
footings(E, epads);
poly(E, 'M120,650H200V690H120V650 M120,744H200V772H120V744', R, 2);

// cores of the towers, in plan units of the middle sector
const O = '#8c8c14';
function core([X, Y], kind) {
  const d = kind === 'a'
    ? 'M4 3H110V9H198V58H182L178 98H172V112H34V106M4 3V76H24V98H34V90M12 12H102M12 12V30M12 40H104V34M12 74H108V66M60 3V12M60 32V40M104 12V30M142 12V22M142 32V46M142 56V75M120 12H190M190 18V50M170 70H182M34 106H150'
    : 'M3 2H110V40H104V10H12M3 2V105H45V118H164V25H130V30H158V60H95V115M10 40H82M60 30V48M60 62V75M60 85V95M95 88H105M120 88H135M145 88H155M110 82V94M142 82V94M10 50V96H40V104M60 104V118M100 60V110M12 10V36';
  svg += `<path transform="translate(${X} ${Y}) scale(.3827 .6059)" d="${d}" fill="none" stroke="${O}" stroke-width="3" vector-effect="non-scaling-stroke"/>`;
}
for (const p of [M(345, 1172), E(230, 1172), E(230, 335), W(543, 1000)]) core(p, 'a');
for (const p of [M(845, 1162), E(728, 1162), E(728, 325), M(852, 600), W(915, 988)]) core(p, 'b');
poly(M, 'M350,618H462V628H450V650 M462,618H575V725H510 M350,618V695H362V725H460V800H0 M358,630H410V710 M462,655H570 M462,688H535V695H570 M514,622V640 M514,650V670 M518,580V612 M285,640V800 M227,655V675 M910,490V582 M852,567H912 M852,582H960V640 M88,685V720 M115,755V800 M1125,437V460 M1200,420V460 M1140,797H1195V822H1235V850H1145V797 M797,1132V1165H850 M893,1132V1162 M0,797H460', O, 3);
poly(W, 'M808,785V898H878V1032H915 M962,697V1000 M1145,590V662 M1110,632V682H1180 M1110,632H1142 M1160,612H1187V680 M1295,540V595H1325V618H1568 M1186,785V1045 M1300,785V1045H1200 M357,1240V1295 M1437,490V528H1458', O, 3);
poly(E, 'M190,717H890 M160,799H890 M743,717V799 M377,300V322H425 M730,350V270 M735,325H890 M890,350H1078V245 M735,240V325 M1080,350V450H1110 M455,368H540 M600,368H730 M600,278V335 M675,1070V1118H785V1070 M790,230V250H830', O, 3);
poly(W, 'M800,790V905 M820,782V885H870 M868,905V1040H900 M885,895V1020H900 M955,700V985 M972,695V980 M1100,606V686H1192V606H1145 M1288,545V590 M1305,540V585 M1330,605H1520V480H1568 M1330,625H1522 M1180,780V1040 M1192,780V1040 M1292,780V1040', '#9a9a9a', 1.5);
poly(M, 'M0,790H200V678H330V630 M0,807H200V745 M1175,575H1568 M1175,590H1568 M1175,820H1568V828H1175 M1175,812H1240V858H1175', '#9a9a9a', 1.5);
poly(E, 'M190,705H902V730H190 M140,590V812H902V786H190 M0,572H166V825H0 M385,325H450V380H550V395H622V402H702 M455,360H580 M585,280V340 M612,280V340 M710,290V318H808V232H1068V342 M1075,350V457H1120 M1105,445V1380L1045,1425 M1128,440V1385 M663,1063H792V1123H663V1063', '#9a9a9a', 1.5);
poly(M, 'M845,700V543H930V530H1180V585H1568 M865,700V735H958V838H1240 M1240,825H1568', '#1818a8', 2);
poly(E, 'M0,590H162V822H0', '#1818a8', 2);

// ramp hatching
const hatch = (S, x1, x2, n, y1, y2) => { let s = ''; for (let i = 0; i < n; i++) s += `M${Math.round(x1 + (x2 - x1) * i / (n - 1))},${y1}V${y2} `; poly(S, s, '#6d7278', 1); };
const hatchH = (S, y1, y2, n, x1, x2) => { let s = ''; for (let i = 0; i < n; i++) s += `M${x1},${Math.round(y1 + (y2 - y1) * i / (n - 1))}H${x2} `; poly(S, s, '#6d7278', 1); };
hatch(M, 1018, 1130, 13, 470, 500); hatch(M, 1010, 1122, 13, 872, 902); hatch(M, 1335, 1395, 8, 506, 540); hatch(M, 390, 503, 12, 1150, 1160);
hatch(W, 572, 658, 12, 976, 988); hatch(E, 268, 380, 12, 1150, 1160);
hatchH(M, 590, 662, 10, 735, 790); hatchH(M, 653, 722, 10, 1200, 1222); hatchH(E, 700, 735, 6, 230, 272); hatchH(E, 790, 820, 5, 230, 272); hatchH(E, 1213, 1285, 11, 1088, 1105);

// columns: [x, y, w, h]
function cols(S, dw, dh, list) {
  const [sx, sy] = scale.get(S);
  for (const [x, y, w = dw, h = dh] of list) {
    const [cx, cy] = S(x, y);
    rect(cx - w / sx / 2, cy - h / sy / 2, w / sx, h / sy, 'none', O, 2);
  }
}
cols(M, 24, 15, [[171, 1369], [285, 1369], [397, 1369], [510, 1369], [622, 1369], [735, 1369, 20, 18], [735, 1393, 20, 18], [847, 1369, 20, 18], [847, 1393, 20, 18], [959, 1369], [1034, 1369], [1150, 1369], [959, 1413], [1034, 1413], [1150, 1413], [169, 1271, 24, 26], [265, 1271, 24, 26], [566, 1266, 24, 36], [709, 1266, 24, 36], [783, 1276, 26, 18], [980, 1085, 58, 14], [980, 1131, 58, 14], [1134, 1090], [1134, 1138], [1134, 1209], [1141, 1279, 40, 12], [1490, 1271, 22, 26], [1490, 1369], [234, 712, 24, 28], [657, 712, 24, 28], [793, 715, 22, 24], [235, 792], [333, 792], [565, 792], [657, 792], [657, 815], [793, 815], [878, 815], [997, 815], [997, 845], [1135, 504], [1135, 548], [1135, 618], [1135, 688], [1135, 758], [1135, 815], [980, 503, 60, 14], [980, 548, 60, 14], [1135, 845], [1490, 432, 22, 26], [1490, 529]]);
cols(E, 24, 15, [[51, 431, 24, 26], [143, 431, 24, 26], [449, 426, 24, 34], [586, 426, 24, 34], [660, 435, 26, 18], [53, 529], [157, 529], [293, 529], [374, 529], [455, 529], [588, 531, 20, 20], [588, 552, 20, 20], [701, 531, 20, 20], [701, 552, 20, 20], [811, 529], [879, 529], [811, 575], [879, 575], [1023, 575], [1023, 529], [1025, 313], [1025, 379], [1025, 446], [1025, 246], [861, 244, 60, 14], [861, 291, 60, 14], [861, 1085, 60, 14], [861, 1131, 60, 14], [1025, 1089], [1025, 1138], [1025, 1207], [1025, 1277], [51, 1271, 24, 26], [147, 1271, 24, 26], [447, 1265, 24, 36], [591, 1265, 24, 36], [665, 1276, 26, 18], [53, 1369], [167, 1369], [280, 1369], [392, 1369], [504, 1369], [616, 1371, 20, 20], [616, 1393, 20, 20], [730, 1371, 20, 20], [730, 1393, 20, 20], [842, 1369], [954, 1369], [1023, 1369], [842, 1415], [954, 1415], [1023, 1415], [445, 717, 16, 5], [742, 717, 16, 5], [882, 717, 16, 5], [445, 801, 12, 10], [882, 801, 12, 10]]);
cols(W, 17, 17, [[408, 1220], [494, 1220], [578, 1220], [663, 1220], [747, 1220], [831, 1221, 14, 20], [831, 1246, 14, 20], [915, 1221, 14, 20], [915, 1246, 14, 20], [1000, 1220], [1056, 1220], [1143, 1220], [1000, 1270], [1056, 1270], [1143, 1270], [408, 1110, 16, 28], [480, 1110, 16, 28], [704, 1104, 16, 40], [812, 1104, 16, 40], [868, 1114, 20, 20], [1015, 900, 44, 14], [1015, 953, 44, 14], [1131, 900, 20, 15], [1131, 961, 20, 15], [1131, 1040, 20, 15], [1137, 1118, 30, 12], [1500, 1254], [1499, 1144, 14, 28], [1548, 520, 16, 34]]);

// tags: yellow beams, green and red level bars
function beams(S, w, h, list) {
  const [sx, sy] = scale.get(S);
  for (const [x, y, bw = w, bh = h, rot = 0] of list) {
    const [cx, cy] = S(x, y), ww = bw / sx, hh = bh / sy, e = rot ? `transform="rotate(${rot} ${cx} ${cy})"` : '';
    rect(cx - ww / 2, cy - hh / 2, ww, hh, '#8c8c14', '#ffff00', 1.5, e);
    rect(cx - ww / 2 + 3, cy - hh / 2 + 1, ww - 6, hh - 3, '#ffff00', 'none', 0, e);
  }
}
beams(W, 80, 17, [[445, 1168], [593, 1160], [992, 1150], [1136, 1081], [1096, 1196], [1316, 1174], [423, 1299], [1284, 1295], [1400, 717], [672, 858, 74, 17, -32], [1362, 512, 76, 17, -20]]);
beams(M, 106, 15, [[1190, 426], [1375, 661], [445, 1315], [1040, 1165], [1136, 1244], [629, 1413], [1058, 1413]]);
beams(E, 106, 15, [[475, 297], [887, 210], [360, 475], [837, 467], [927, 552], [645, 720], [645, 758], [645, 798], [444, 967], [336, 1314], [830, 1217], [1021, 1244], [673, 1343], [877, 1392], [186, 1435], [1117, 604, 26, 66], [1109, 1106, 24, 66]]);
function bars(S, w, h, fill, list) {
  const [sx, sy] = scale.get(S);
  for (const [x, y, bw = w, bh = h] of list) { const [cx, cy] = S(x, y); rect(cx - bw / sx / 2, cy - bh / sy / 2, bw / sx, bh / sy, fill); }
}
bars(W, 64, 14, G, [[302, 1381], [710, 1385], [221, 1303], [197, 1225], [360, 984], [518, 905], [560, 862], [741, 752], [981, 624], [1252, 500]]);
bars(M, 85, 12, G, [[523, 517], [1307, 333], [986, 907, 96], [1168, 461, 72, 8], [517, 1482], [1215, 1484]]);
bars(E, 86, 12, G, [[463, 221], [1312, 266], [1318, 502], [1362, 720], [1318, 1210], [1340, 1447], [542, 1479], [162, 1522], [168, 882, 92], [278, 694, 18, 60]]);
bars(W, 66, 14, '#ff0000', [[1193, 1364]]);
bars(M, 80, 10, '#ff0000', [[273, 592]]);
bars(E, 84, 11, '#ff0000', [[884, 152], [1025, 1506]]);
poly(M, 'M380,1465L425,1420L460,1445', '#00c800', 1.5);

// boreholes
const mag = '#ff00ff';
for (const [S, x, y, s, ly] of [[W, 440, 1130, 'NH-8', 1102], [W, 1047, 1168, 'NH-7', 1140], [W, 738, 825, 'NH-9', 872], [M, 363, 1304, 'NH-6', 1278], [M, 848, 934, 'NH-5', 904], [E, 90, 1333, 'NH-4', 1312], [E, 953, 127, 'NH-1', 170], [E, 980, 1000, 'NH-2', 976], [E, 893, 1304, 'NH-3', 1280]]) {
  const [cx, cy] = S(x, y), ty = S(x, ly)[1];
  svg += `<circle cx="${cx}" cy="${cy}" r="10.500" fill="none" stroke="${mag}" stroke-width="2"/><path d="M${cx} ${cy}h-10.500a10.500 10.500 0 0 1 10.500 -10.500zM${cx} ${cy}h10.500a10.500 10.500 0 0 1 -10.500 10.500z" fill="${mag}"/><path d="M${cx - 5} ${cy + 8}h10v6h-10z" fill="${mag}"/>`;
  line(cx - 15, cy, cx + 15, cy, mag, 1.5);
  text(cx, ty, s, mag, 12, 'text-anchor="middle" font-weight="700"');
}

// labels
for (const [S, x, y, s] of [[W, 783, 1167, '104동'], [M, 905, 768, '105동'], [M, 670, 1321, '103동'], [E, 552, 482, '101동'], [E, 552, 1321, '102동']]) {
  const [cx, cy] = S(x, y);
  rect(cx - 21.5, cy - 7.5, 43, 15, 'none', R, 1.5);
  text(cx, cy + 5, s, R, 14);
}
for (const [x, y, a, b] of [[850, 597, 'EL.+22.59', 'G.L-23.61'], [675, 1015, 'EL.+29.19', 'G.L-17.01']]) {
  const [X, Y] = M(x, y);
  rect(X, Y + 18, 81, 18, 'none', '#00c800', 1.5);
  rect(X, Y, 81, 18, 'none', '#e0e000', 1.5);
  text(X + 40, Y + 14, a, '#e8e800', 15);
  text(X + 40, Y + 32, b, '#00d000', 15);
}
text(...M(1290, 852), 'SLOPE =1:1.0', '#ddd', 15, '');

// section marks
for (const [S, s, tx, ty, tri, ln] of [
  [W, 'C', 163, 1122, [137, 1167, 158, 1132, 180, 1167], 'M159,1167V1202H600'],
  [W, 'B', 1049, 1401, [1070, 1382, 1110, 1362, 1110, 1402], 'M1110,1382H1148V1080'],
  [M, 'D', 365, 436, [280, 417, 338, 424, 300, 452], 'M335,425L245,445L420,745'],
  [M, 'E', 960, 305, [890, 273, 943, 292, 890, 310], 'M890,292H840V735'],
  [M, 'A', 1037, 1500, [1058, 1484, 1110, 1466, 1110, 1502], 'M1110,1484H1158V1218'],
  [E, 'F', 1125, 90, [1048, 55, 1100, 73, 1048, 91], 'M1048,73H1000V342'],
  [E, 'G', 1210, 927, [1182, 855, 1243, 855, 1212, 888], 'M1212,855V824H585'],
  [E, 'H', 865, 1502, [887, 1484, 941, 1466, 941, 1502], 'M941,1484H989V1218']]) {
  const [p, q, r] = [S(tri[0], tri[1]), S(tri[2], tri[3]), S(tri[4], tri[5])];
  const mid = s === 'G' ? [(p[0] + q[0]) / 2, p[1]] : [(p[0] + q[0] + r[0]) / 3, (p[1] + q[1] + r[1]) / 3];
  svg += `<path d="M${p.join(' ')}L${q.join(' ')}L${r.join(' ')}z" fill="#212830" stroke="#fff" stroke-width="2"/>`;
  svg += `<path d="M${p.join(' ')}L${q.join(' ')}L${r1(mid[0])} ${r1(mid[1])}L${r.join(' ')}z" fill="#fff"/>`;
  poly(S, ln, '#d0d0d0', 2);
  text(...S(tx, ty), s, '#fff', s === 'C' ? 20 : 28);
}

// boundary leaders
poly(E, 'M1136,240L1260,172H1338 M1296,172V194H1338 M810,1460V1639', '#d8d8d8', 2);
path('M3660 1743V1634M3660 1729H3676M3660 1743H3676', '#d8d8d8', 2);
text(3868, 859, '대지경계선', '#e8e8e8', 10, '');
text(3868, 873, '구역경계선', '#e8e8e8', 10, '');
text(3681, 1733, '대지경계선', '#e8e8e8', 10, '');
text(3681, 1747, '구역경계선', '#e8e8e8', 10, '');

// axis icon
path('M1125 2010V2093H1212M1118 2086H1132V2100H1118z', '#b8bcc2', 2);
path('M1126 1981L1136 1993L1146 1981M1136 1993V2006M1216 2072L1236 2094M1236 2072L1216 2094', '#b8bcc2', 2);

// view controls
text(1079, 76, '[−][평면도][2D 와이어프레임]', '#e4e4e4', 22, '');
svg += `<circle cx="4252.700" cy="229.600" r="92.500" fill="none" stroke="#8a8c92" stroke-opacity=".38" stroke-width="22"/>`;
rect(4208, 186, 90, 89, '#acafb3', '#7e8186', 1.5);
rect(4225, 202, 55, 55, '#a1a4ae');
text(4252.7, 238, '평면도', '#4e535c', 22);
for (const [x, y, s] of [[4252.7, 145, '북'], [4154, 242, '서'], [4349.7, 242, '동'], [4252.7, 340, '남']]) text(x, y, s, '#a4a6a9', 31);
rect(4214, 380, 79, 29, '#a4a6b8', 'none', 0, 'rx="6" opacity=".9"');
text(4221, 400, 'WCS', '#5a5d66', 18, '');
path('M4272 390H4285L4278.500 396z', '#c4c6d4', 1.5);
path('M4245.600 380V409', '#e0e0e8', 1.5);
path('M4294 77H4312', '#f0f0f0', 5);
path('M4331 69H4341V79H4331z', '#f0f0f0', 3.5);
path('M4334 65H4345V76', '#f0f0f0', 2);
path('M4364 66L4377 79M4377 66L4364 79', '#f0f0f0', 4);

document.getElementById('view').innerHTML = svg;
```
